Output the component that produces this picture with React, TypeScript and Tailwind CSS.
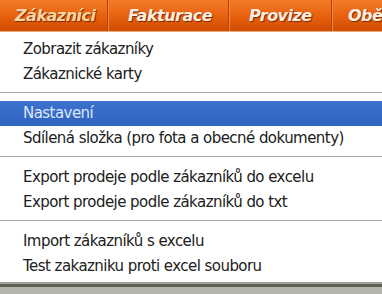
const tabs = [
  { label: "Zákazníci", active: true, w: "w-[108px]", pl: "pl-[15px]" },
  { label: "Fakturace", active: false, w: "w-[121px]", pl: "pl-[20px]" },
  { label: "Provize", active: false, w: "w-[103px]", pl: "pl-[20px]" },
  { label: "Obě", active: false, w: "w-[60px]", pl: "pl-[16px]" },
];

const groups = [
  ["Zobrazit zákazníky", "Zákaznické karty"],
  ["Nastavení", "Sdílená složka (pro fota a obecné dokumenty)"],
  ["Export prodeje podle zákazníků do excelu", "Export prodeje podle zákazníků do txt"],
  ["Import zákazníků s excelu", "Test zakazniku proti excel souboru"],
];

export default function App() {
  return (
    <div className="w-[382px] h-[294px] overflow-hidden bg-[#b4b4ac] font-['DejaVu_Sans',sans-serif]">
      {/* top menu */}
      <div className="h-[32px] flex bg-gradient-to-b from-[#f27a26] via-[#e8620e] to-[#cf4c04] border-b border-[#e9a878]">
        {tabs.map((t) => (
          <div
            key={t.label}
            className={`${t.w} ${t.pl} shrink-0 flex items-center border-r border-r-[#b54000] shadow-[1px_0_0_#f3874a]`}
          >
            <span
              className={`text-[16px] font-bold italic tracking-[-0.5px] whitespace-nowrap [text-shadow:1px_1px_1px_#7a2800] ${
                t.active ? "text-[#f6d4a4]" : "text-[#fdeee4]"
              }`}
            >
              {t.label}
            </span>
          </div>
        ))}
      </div>

      {/* dropdown */}
      <div className="bg-white pt-[5px] pb-[3px]">
        {groups.map((g, gi) => (
          <div key={gi}>
            {gi > 0 && (
              <div className="pt-[5px] pb-[8px]">
                <div className="h-px bg-[#a9a9a9]" />
              </div>
            )}
            {g.map((item) => {
              const sel = item === "Nastavení";
              return (
                <div
                  key={item}
                  className={`h-[25px] flex items-center pl-[23px] text-[15px] tracking-[-0.55px] whitespace-nowrap ${
                    sel ? "bg-gradient-to-b from-[#3d73cf] to-[#2e62be] text-[#dce7fb]" : "text-[#202020]"
                  }`}
                >
                  {item}
                </div>
              );
            })}
          </div>
        ))}
      </div>
      <div className="h-[2px] bg-[#a2a29a]" />
      <div className="h-[3px] bg-[#626259]" />
    </div>
  );
}
